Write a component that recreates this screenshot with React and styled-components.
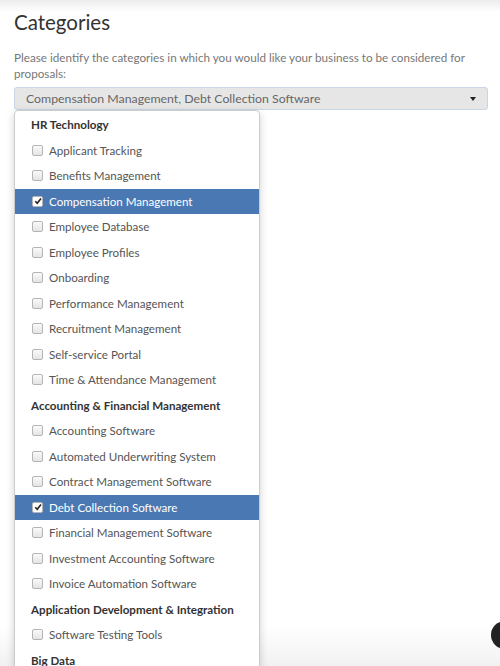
import React from 'react'
import { styled, createGlobalStyle } from 'styled-components'

const GlobalStyle = createGlobalStyle`
  html, body {
    margin: 0;
    padding: 0;
    background: #fff;
    font-family: Lato, "Noto Sans", sans-serif;
    overflow: hidden;
  }
`

const groups = [
  {
    title: 'HR Technology',
    items: [
      'Applicant Tracking',
      'Benefits Management',
      'Compensation Management',
      'Employee Database',
      'Employee Profiles',
      'Onboarding',
      'Performance Management',
      'Recruitment Management',
      'Self-service Portal',
      'Time & Attendance Management',
    ],
  },
  {
    title: 'Accounting & Financial Management',
    items: [
      'Accounting Software',
      'Automated Underwriting System',
      'Contract Management Software',
      'Debt Collection Software',
      'Financial Management Software',
      'Investment Accounting Software',
      'Invoice Automation Software',
    ],
  },
  {
    title: 'Application Development & Integration',
    items: ['Software Testing Tools'],
  },
  { title: 'Big Data', items: [] },
]

const selected = ['Compensation Management', 'Debt Collection Software']

const Page = styled.div`
  position: relative;
  width: 500px;
  height: 666px;
  overflow: hidden;
  background: #fff;
  &::before {
    content: '';
    position: absolute;
    left: 0;
    right: 0;
    top: 0;
    height: 12px;
    background: linear-gradient(#ececec, rgba(255,255,255,0));
    z-index: 1;
  }
  &::after {
    content: '';
    position: absolute;
    left: 0;
    right: 0;
    bottom: 0;
    height: 40px;
    background: linear-gradient(rgba(255,255,255,0), rgba(238,238,238,0.8));
    z-index: 1;
    pointer-events: none;
  }
`

const Content = styled.div`
  padding: 10px 12px 0 14px;
`

const Title = styled.h1`
  margin: 0;
  font-size: 20.5px;
  font-weight: 400;
  color: #333;
  line-height: 24px;
`

const Help = styled.p`
  margin: 15px 0 6px;
  font-size: 11.7px;
  line-height: 16px;
  color: #777;
`

const Select = styled.div`
  position: relative;
  height: 23px;
  width: 474px;
  display: flex;
  align-items: center;
  justify-content: space-between;
  padding: 0 11px 0 11px;
  box-sizing: border-box;
  background: #e6e6e6;
  border: 1px solid #c8d6e6;
  border-radius: 3px;
  font-size: 12.3px;
  color: #666;
`

const Caret = styled.span`
  width: 0;
  height: 0;
  border-left: 3.5px solid transparent;
  border-right: 3.5px solid transparent;
  border-top: 4px solid #222;
`

const Menu = styled.ul`
  position: absolute;
  left: 14px;
  top: 110px;
  width: 244px;
  margin: 0;
  padding: 1px 0 0;
  list-style: none;
  background: #fff;
  border: 1px solid #ccc;
  border-radius: 4px 4px 0 0;
  box-shadow: 0 3px 8px rgba(0,0,0,0.18);
  z-index: 2;
`

const Header = styled.li`
  height: 25.5px;
  display: flex;
  align-items: center;
  padding-left: 16px;
  font-size: 11.6px;
  font-weight: 700;
  color: #333;
`

const Option = styled.li`
  height: 25.5px;
  display: flex;
  align-items: center;
  gap: 6px;
  padding-left: 17px;
  font-size: 11.6px;
  color: ${p => (p.$active ? '#fff' : '#555')};
  background: ${p => (p.$active ? '#4a78b3' : 'transparent')};
`

const Box = styled.span`
  width: 9px;
  height: 9px;
  border: 1px solid #b5b5b5;
  border-radius: 2px;
  background: ${p => (p.$checked ? '#fff' : 'linear-gradient(#fafafa, #e4e4e4)')};
  display: flex;
  align-items: center;
  justify-content: center;
  flex-shrink: 0;
`

const Fab = styled.div`
  position: absolute;
  left: 491px;
  top: 621px;
  width: 28px;
  height: 28px;
  border-radius: 50%;
  background: #222;
  z-index: 4;
`

function Check({ checked }) {
  return (
    <Box $checked={checked}>
      {checked && (
        <svg width="8" height="8" viewBox="0 0 8 8">
          <path d="M1.2 4.2 L3.2 6.2 L7 1.4" fill="none" stroke="#222" strokeWidth="1.6" />
        </svg>
      )}
    </Box>
  )
}

export default function App() {
  return (
    <Page>
      <GlobalStyle />
      <Content>
        <Title>Categories</Title>
        <Help>
          Please identify the categories in which you would like your business to be considered for
          proposals:
        </Help>
        <Select>
          <span>Compensation Management, Debt Collection Software</span>
          <Caret />
        </Select>
      </Content>
      <Menu>
        {groups.map(g => (
          <React.Fragment key={g.title}>
            <Header>{g.title}</Header>
            {g.items.map(item => {
              const on = selected.includes(item)
              return (
                <Option key={item} $active={on}>
                  <Check checked={on} />
                  <span>{item}</span>
                </Option>
              )
            })}
          </React.Fragment>
        ))}
      </Menu>
      <Fab />
    </Page>
  )
}
